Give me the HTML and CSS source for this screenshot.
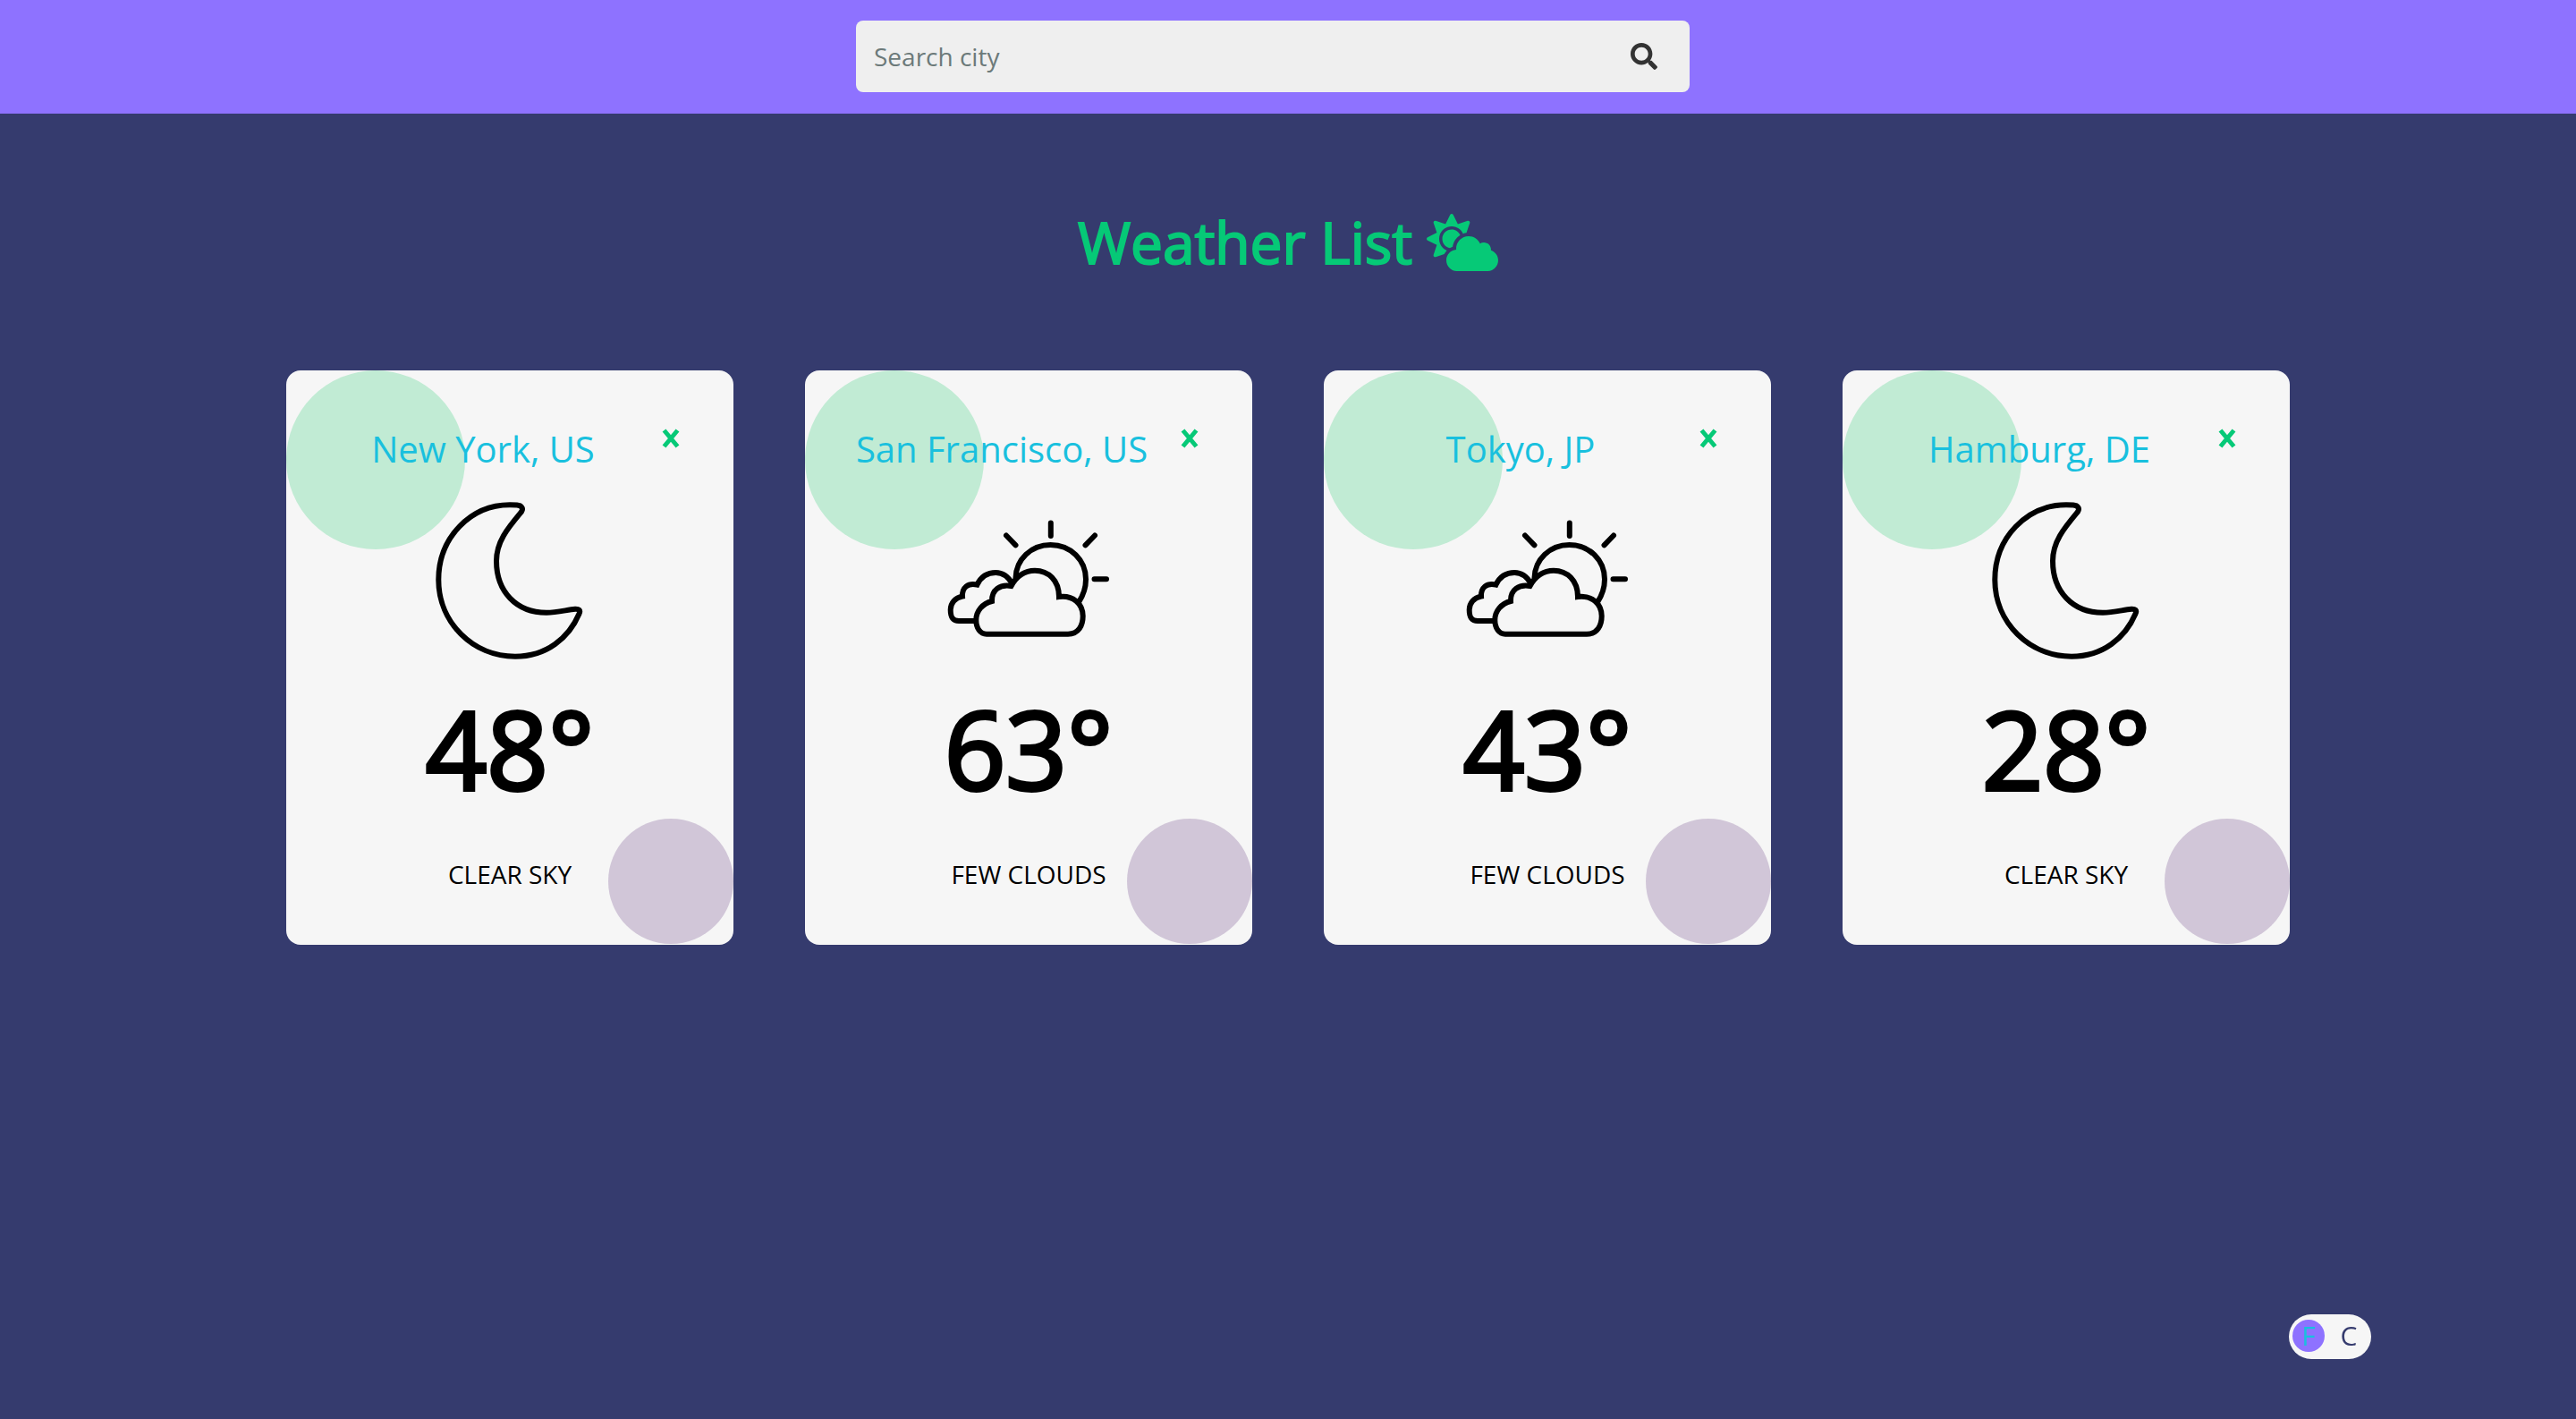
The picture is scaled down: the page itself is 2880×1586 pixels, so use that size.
FILE: index.html
```html
<!DOCTYPE html>
<html lang="en">
<head>
<meta charset="utf-8">
<meta name="viewport" content="width=device-width, initial-scale=1">
<title>Weather List</title>
<link rel="stylesheet" href="styles.css">
</head>
<body>
<svg class="sprite" aria-hidden="true">
  <symbol id="cross" viewBox="0 0 20 24">
    <path d="M2.500 3L17.500 21M17.500 3L2.500 21"/>
  </symbol>
  <symbol id="moon" viewBox="-10 0 200 200">
    <path d="M90 25.300C46 25.300 10.300 62 10.300 109C10.300 157 49 194.700 96 194.700C131 194.700 156 174 167.500 147C169.500 143 167 141.500 163 141.700C154 142.500 143 145.700 131 145.700C97 145.700 75 122 75 88C75 66 88 51 103 33C105.500 29 103 26 98 25.600C95 25.300 92 25.300 90 25.300Z"/>
  </symbol>
  <symbol id="few-clouds" viewBox="-10 0 200 200">
    <path d="M114.800 45.500V60M65 59.500L75.500 70.300M164 59.500L153.500 70.300M163.500 108.300H177"/>
    <path d="M75.500 107C76 86 93 70 114.500 70C137 70 154 87 154 108.500C154 118 151 126.500 146 134"/>
    <path d="M71.700 113.500C67 105 60 101 53.300 101C44 101 36.500 106 32.500 114.500C22 112 15.500 118 16 127.500C8 129 2.700 135 2.700 142.500C2.700 150.500 4.500 155 12 155H30"/>
    <path d="M43 169.700H134C146 169.700 150.700 160 150.700 149.500C150.700 136 140 126 124 128C124 109.500 112 98.700 97 98.700C86 98.700 77 104 70.500 116C58 114 48.500 120 49 133C38.500 135.500 31.300 144 31.300 154C31.300 163 36 169.700 43 169.700Z"/>
  </symbol>
</svg>

<header class="topbar">
  <form class="search" role="search">
    <input class="search-input" id="city" type="text" placeholder="Search city" aria-label="Search city">
    <button class="search-button" type="submit" aria-label="Search">
      <svg viewBox="0 0 512 512" aria-hidden="true"><path d="M505 442.700L405.300 343c-4.500-4.500-10.600-7-17-7H372c27.600-35.300 44-79.700 44-128C416 93.100 322.900 0 208 0S0 93.100 0 208s93.100 208 208 208c48.300 0 92.700-16.400 128-44v16.300c0 6.400 2.500 12.500 7 17l99.700 99.700c9.400 9.400 24.600 9.400 33.900 0l28.300-28.300c9.400-9.400 9.400-24.600.1-34zM208 336c-70.700 0-128-57.200-128-128 0-70.700 57.200-128 128-128 70.700 0 128 57.200 128 128 0 70.700-57.200 128-128 128z"/></svg>
    </button>
  </form>
</header>

<main class="content">
  <h1 class="title">Weather List
    <svg class="title-icon" viewBox="0 0 640 512" aria-hidden="true"><path d="M575.200 325.700c.2-1.900.8-3.700.8-5.600 0-35.300-28.700-64-64-64-12.600 0-24.200 3.800-34.100 10-17.600-38.800-56.500-66-101.900-66-61.800 0-112 50.100-112 112 0 3 .7 5.800.9 8.700-49.600 3.700-88.900 44.700-88.900 95.300 0 53 43 96 96 96h272c53 0 96-43 96-96 0-42.100-27.200-77.400-64.800-90.400zm-430.400-22.600c-43.700-43.700-43.700-114.700 0-158.300 43.700-43.700 114.700-43.700 158.400 0 9.700 9.700 16.900 20.900 22.300 32.700 9.800-3.700 20.100-6 30.700-7.500L386 81.100c4-11.900-7.300-23.100-19.200-19.200L279 91.200 237.500 8.400C232-2.800 216-2.800 210.400 8.400L169 91.200 81.100 61.900C69.300 58 58 69.300 61.900 81.100l29.300 87.800-82.800 41.500c-11.200 5.600-11.200 21.500 0 27.100l82.800 41.400-29.300 87.800c-4 11.900 7.300 23.100 19.200 19.200l76.100-25.300c6.100-12.400 14-23.700 23.600-33.500-13-5.400-25.400-13.400-36-24zm-4.800-79.200c0 40.800 29.300 74.800 67.900 82.300 8-4.700 16.300-8.800 25.200-11.700 5.400-44.300 31-82.500 67.400-105C287.300 160.400 258 140 224 140c-46.300 0-84 37.600-84 83.900z"/></svg>
  </h1>

  <section class="cards">
    <article class="card">
      <div class="card-head"><h2 class="city">New York, US</h2><button class="remove" type="button" aria-label="Remove New York"><svg class="remove-icon" aria-hidden="true"><use href="#cross"/></svg></button></div>
      <svg class="weather-icon" aria-hidden="true"><use href="#moon"/></svg>
      <p class="temp">48°</p>
      <p class="desc">clear sky</p>
    </article>
    <article class="card">
      <div class="card-head"><h2 class="city">San Francisco, US</h2><button class="remove" type="button" aria-label="Remove San Francisco"><svg class="remove-icon" aria-hidden="true"><use href="#cross"/></svg></button></div>
      <svg class="weather-icon" aria-hidden="true"><use href="#few-clouds"/></svg>
      <p class="temp">63°</p>
      <p class="desc">few clouds</p>
    </article>
    <article class="card">
      <div class="card-head"><h2 class="city">Tokyo, JP</h2><button class="remove" type="button" aria-label="Remove Tokyo"><svg class="remove-icon" aria-hidden="true"><use href="#cross"/></svg></button></div>
      <svg class="weather-icon" aria-hidden="true"><use href="#few-clouds"/></svg>
      <p class="temp">43°</p>
      <p class="desc">few clouds</p>
    </article>
    <article class="card">
      <div class="card-head"><h2 class="city">Hamburg, DE</h2><button class="remove" type="button" aria-label="Remove Hamburg"><svg class="remove-icon" aria-hidden="true"><use href="#cross"/></svg></button></div>
      <svg class="weather-icon" aria-hidden="true"><use href="#moon"/></svg>
      <p class="temp">28°</p>
      <p class="desc">clear sky</p>
    </article>
  </section>
</main>

<button class="unit-toggle" type="button" aria-label="Switch between Fahrenheit and Celsius">
  <span class="unit unit-active">F</span>
  <span class="unit">C</span>
</button>
</body>
</html>
```
FILE: styles.css
```css
* {
  box-sizing: border-box;
}

body {
  margin: 0;
  min-height: 100vh;
  background: #353b6e;
  color: #000;
  font-family: "Open Sans", "Noto Sans", sans-serif;
}

h1, h2, p {
  margin: 0;
}

button {
  border: 0;
  padding: 0;
  background: none;
  font-family: inherit;
  cursor: pointer;
}

.sprite {
  position: absolute;
  width: 0;
  height: 0;
}

.topbar {
  display: flex;
  justify-content: center;
  padding: 23px 34px 24px 0;
  background: #8e72ff;
}

.search {
  display: flex;
  align-items: center;
  width: 932px;
  height: 80px;
  max-width: 100%;
  padding: 0 36px 0 20px;
  border-radius: 8px;
  background: #efefef;
}

.search-input {
  flex: 1;
  min-width: 0;
  height: 100%;
  border: 0;
  padding: 0;
  background: none;
  outline: none;
  color: #333;
  font-family: inherit;
  font-size: 28px;
}

.search-input::placeholder {
  color: #6c7a7a;
  opacity: 1;
}

.search-button svg {
  display: block;
  width: 30px;
  height: 30px;
  fill: #333;
}

.content {
  padding: 94px 320px 0;
}

.title {
  display: flex;
  justify-content: center;
  align-items: center;
  gap: 16px;
  margin-bottom: 93px;
  color: #06c977;
  font-size: 64px;
  font-weight: 400;
  line-height: 100px;
  -webkit-text-stroke: 2px currentColor;
}

.title-icon {
  width: 80px;
  height: 64px;
  fill: currentColor;
}

.cards {
  display: grid;
  grid-template-columns: repeat(auto-fit, minmax(440px, 1fr));
  gap: 80px;
}

.card {
  position: relative;
  display: flex;
  flex-direction: column;
  align-items: center;
  padding: 60px 40px;
  border-radius: 16px;
  background: #f6f6f6;
  overflow: hidden;
}

.card::before,
.card::after {
  content: "";
  position: absolute;
  border-radius: 50%;
}

.card::before {
  top: 0;
  left: 0;
  width: 200px;
  height: 200px;
  background: #c1ebd4;
}

.card::after {
  right: 0;
  bottom: 1px;
  width: 140px;
  height: 140px;
  background: #d1c6d8;
}

.card-head {
  position: relative;
  display: flex;
  align-items: flex-start;
  width: 100%;
}

.city {
  flex: 1;
  color: #19c0de;
  font-size: 40px;
  font-weight: 400;
  line-height: 56px;
  text-align: center;
  white-space: nowrap;
}

.remove {
  display: flex;
  justify-content: center;
  width: 60px;
  padding-top: 4px;
  color: #06c977;
}

.remove-icon {
  width: 20px;
  height: 24px;
  fill: none;
  stroke: currentColor;
  stroke-width: 5;
}

.weather-icon {
  position: relative;
  width: 200px;
  height: 200px;
  margin-top: 9px;
  fill: #f6f6f6;
  stroke: #000;
  stroke-width: 6;
  stroke-linecap: round;
}

.temp {
  margin-top: 16px;
  font-size: 120px;
  line-height: 164px;
  -webkit-text-stroke: 4px currentColor;
}

.desc {
  margin-top: 39px;
  font-size: 28px;
  line-height: 38px;
  text-transform: uppercase;
}

.unit-toggle {
  position: fixed;
  right: 229px;
  bottom: 67px;
  display: flex;
  align-items: flex-start;
  justify-content: space-between;
  width: 92px;
  height: 50px;
  padding: 6px 7px 0 4px;
  border-radius: 25px;
  background: #f6f6f6;
}

.unit {
  width: 36px;
  border-radius: 50%;
  color: #353b6e;
  font-size: 30px;
  line-height: 36px;
  text-align: center;
}

.unit-active {
  background: #8e72ff;
  color: #19c0de;
}
```
